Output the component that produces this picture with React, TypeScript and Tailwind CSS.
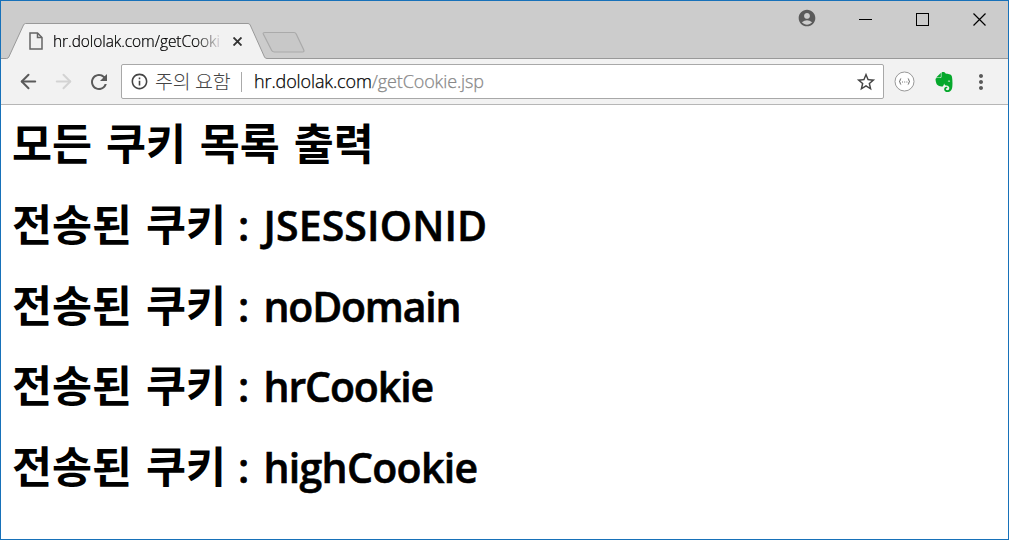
import { ArrowLeft, ArrowRight } from 'lucide-react'
import { MdAccountCircle, MdInfoOutline, MdMoreVert, MdRefresh, MdStarBorder } from 'react-icons/md'
import { SiEvernote } from 'react-icons/si'

const cookies = [
  { name: 'JSESSIONID', tracking: 'tracking-[0.15px]' },
  { name: 'noDomain', tracking: 'tracking-[-1.2px]' },
  { name: 'hrCookie', tracking: 'tracking-[-1.1px]' },
  { name: 'highCookie', tracking: 'tracking-[-0.7px]' },
]

const TabStrip = () => {
  return (
    <div className="relative flex h-[58px] shrink-0 justify-between bg-[#cccccc]">
      {/* Tab outline, new tab button and the strip's bottom line */}
      <svg className="absolute inset-0" width="1007" height="58" fill="none">
        <path d="M0 57.5H5.5Q7 57.5 7.8 56L22.5 24Q23.2 22.5 24.5 22.5H247Q248.5 22.5 249.2 24L263.5 56Q264.2 57.5 266 57.5H1007V58H0Z" fill="#f2f2f2" />
        <path d="M0 57.5H5.5Q7 57.5 7.8 56L22.5 24Q23.2 22.5 24.5 22.5H247Q248.5 22.5 249.2 24L263.5 56Q264.2 57.5 266 57.5H1007" stroke="#999" />
        <path d="M264 31.5H293Q294.5 31.5 295.2 33L302.8 49Q303.5 51 301.5 51H273.5Q271.5 51 270.7 49.5L262.3 33Q261.6 31.5 264 31.5Z" fill="#c8c8c8" stroke="#aaa" strokeWidth="1.2" />
      </svg>

      <div className="relative flex h-9 w-[266px] items-center self-end pl-7">
        <svg width="14" height="18" viewBox="0 0 14 18" fill="none" stroke="#666" strokeWidth="1.5">
          <path d="M1 1H8.5L13 5.5V17H1Z" />
          <path d="M8.5 1V5.5H13" />
        </svg>
        <span className="ml-[10px] w-[168px] whitespace-nowrap bg-linear-to-r from-black from-85% to-transparent to-100% bg-clip-text text-[15.5px] font-light leading-5 tracking-[-0.08px] text-transparent [-webkit-text-stroke:0.2px_#0004]">
          hr.dololak.com/getCooki
        </span>
        <svg className="ml-3" width="9" height="9" stroke="#333" strokeWidth="1.9">
          <path d="M.5 .5L8.5 8.5M8.5 .5L.5 8.5" />
        </svg>
      </div>

      {/* Window controls */}
      <div className="relative mr-[22px] flex h-9 items-center">
        <MdAccountCircle className="mb-[2px] size-5 text-[#5a5a5a]" />
        <svg className="ml-[42px]" width="13" height="13" stroke="#000"><path d="M0 6.5H13" /></svg>
        <svg className="ml-11" width="13" height="13" fill="none" stroke="#000"><rect x=".5" y=".5" width="12" height="12" /></svg>
        <svg className="ml-11" width="13" height="13" stroke="#000" strokeWidth="1.2"><path d="M.5 .5L12.5 12.5M12.5 .5L.5 12.5" /></svg>
      </div>
    </div>
  )
}

const Toolbar = () => {
  return (
    <div className="flex h-[46px] shrink-0 items-center border-b border-[#b6b6b6] bg-[#f2f2f2] pl-4 text-[#5a5a5a]">
      <ArrowLeft className="size-[23px]" strokeWidth={2.1} />
      <ArrowRight className="ml-3 size-[23px] text-[#d3d3d3]" strokeWidth={2.1} />
      <MdRefresh className="ml-3 size-6" />

      <div className="ml-[10px] flex h-[35px] w-[763px] items-center rounded-[2px] border border-[#a8a8a8] bg-white">
        <MdInfoOutline className="ml-2 size-[19px] text-[#444]" />
        <span className="mb-[2px] ml-[6px] w-[78px] whitespace-nowrap font-['Noto_Sans_CJK_KR',sans-serif] text-[19.5px] font-light tracking-[-0.1px] text-[#444]">주의 요함</span>
        <div className="ml-2 h-5 w-px bg-[#aaa]" />
        <div className="mb-px ml-3 whitespace-nowrap text-[18px] font-light tracking-[-0.12px] text-black [-webkit-text-stroke:0.25px_currentColor]">
          hr.dololak.com<span className="text-[#888]">/getCookie.jsp</span>
        </div>
        <MdStarBorder className="ml-auto mr-[6px] size-[22px] text-[#444]" />
      </div>

      <svg className="ml-[10px]" width="21" height="21" viewBox="0 0 21 21" fill="none" stroke="#999">
        <circle cx="10.5" cy="10.5" r="9.5" fill="#fff" />
        <path d="M7.2 7.5Q6.2 7.5 6.2 9Q6.2 10.5 5 10.5Q6.2 10.5 6.2 12Q6.2 13.5 7.2 13.5M13.8 7.5Q14.8 7.5 14.8 9Q14.8 10.5 16 10.5Q14.8 10.5 14.8 12Q14.8 13.5 13.8 13.5" stroke="#777" />
        <path d="M8 11H13.5" strokeDasharray="1 1.2" stroke="#777" />
      </svg>
      <SiEvernote className="ml-[19px] size-5 text-[#06a82c]" />
      <MdMoreVert className="ml-[15px] size-6" />
    </div>
  )
}

const App = () => {
  return (
    <div className="flex h-[540px] w-[1009px] flex-col overflow-hidden border border-[#1771b9] bg-white font-['Open_Sans','Noto_Sans_CJK_KR',sans-serif]">
      <TabStrip />
      <Toolbar />
      <main className="pl-[11px] text-black">
        <h1 className="h-[81px] whitespace-nowrap font-['Noto_Sans_CJK_KR',sans-serif] text-[43.5px] font-bold leading-[74px] [word-spacing:4px]">
          모든 쿠키 목록 출력
        </h1>
        {cookies.map(({ name, tracking }) => (
          <h1 key={name} className="flex h-[80.6px] items-baseline whitespace-nowrap text-[41px] font-semibold leading-[74px] [-webkit-text-stroke:0.6px_black]">
            <span className="w-[226px] font-['Noto_Sans_CJK_KR',sans-serif] text-[43.5px] font-bold [-webkit-text-stroke:0] [word-spacing:4px]">전송된 쿠키</span>
            <span className="w-[25.5px]">:</span>
            <span className={tracking}>{name}</span>
          </h1>
        ))}
      </main>
    </div>
  )
}

export default App
